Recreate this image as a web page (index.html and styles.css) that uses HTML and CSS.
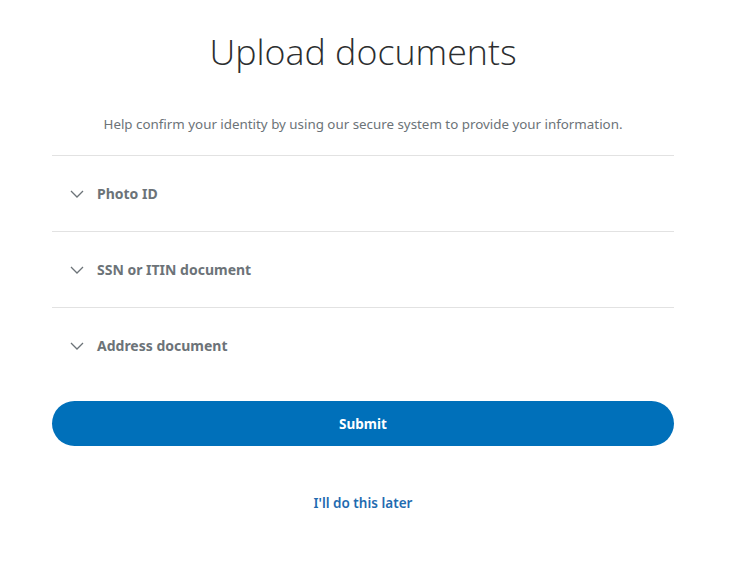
FILE: index.html
```html
<!DOCTYPE html>
<html lang="en">
<head>
<meta charset="utf-8">
<title>Upload documents</title>
<link rel="stylesheet" href="styles.css">
</head>
<body>
<main class="page">
  <h1 class="title">Upload documents</h1>
  <p class="intro">Help confirm your identity by using our secure system to provide your information.</p>
  <ul class="docs">
    <li class="doc">
      <svg class="chev" viewBox="0 0 14 8" width="14" height="8"><path d="M1 1l6 6 6-6" fill="none" stroke="#6c7378" stroke-width="1.3"/></svg>
      <span>Photo ID</span>
    </li>
    <li class="doc">
      <svg class="chev" viewBox="0 0 14 8" width="14" height="8"><path d="M1 1l6 6 6-6" fill="none" stroke="#6c7378" stroke-width="1.3"/></svg>
      <span>SSN or ITIN document</span>
    </li>
    <li class="doc">
      <svg class="chev" viewBox="0 0 14 8" width="14" height="8"><path d="M1 1l6 6 6-6" fill="none" stroke="#6c7378" stroke-width="1.3"/></svg>
      <span>Address document</span>
    </li>
  </ul>
  <button class="submit" type="button">Submit</button>
  <a class="later" href="#">I'll do this later</a>
</main>
</body>
</html>
```
FILE: styles.css
```css
html, body {
  margin: 0;
  padding: 0;
  background: #fff;
}
body {
  font-family: "Noto Sans", "Open Sans", sans-serif;
  color: #2c2e2f;
}
.page {
  width: 622px;
  margin-left: 52px;
  display: flex;
  flex-direction: column;
  align-items: stretch;
}
.title {
  margin: 29px 0 0;
  text-align: center;
  font-family: "Open Sans", sans-serif;
  font-weight: 300;
  font-size: 35.8px;
  line-height: 44px;
  color: #2c2e2f;
}
.intro {
  margin: 41px 0 0;
  text-align: center;
  font-size: 13.35px;
  line-height: 20px;
  color: #6c7378;
}
.docs {
  list-style: none;
  margin: 21px 0 0;
  padding: 0;
}
.doc {
  height: 75px;
  border-top: 1px solid #e2e2e2;
  display: flex;
  align-items: center;
  gap: 13px;
  padding-left: 18px;
  font-size: 14px;
  font-weight: 700;
  color: #6c7378;
}
.chev {
  display: block;
  flex: none;
  margin-top: 1px;
}
.submit {
  margin-top: 18px;
  height: 45px;
  border: 0;
  border-radius: 23px;
  background: #0070ba;
  color: #fff;
  font-family: "Noto Sans", sans-serif;
  font-size: 13.5px;
  font-weight: 700;
  cursor: pointer;
}
.later {
  margin-top: 48px;
  align-self: center;
  font-size: 13.5px;
  font-weight: 600;
  color: #1f6bb0;
  text-decoration: none;
}
```
